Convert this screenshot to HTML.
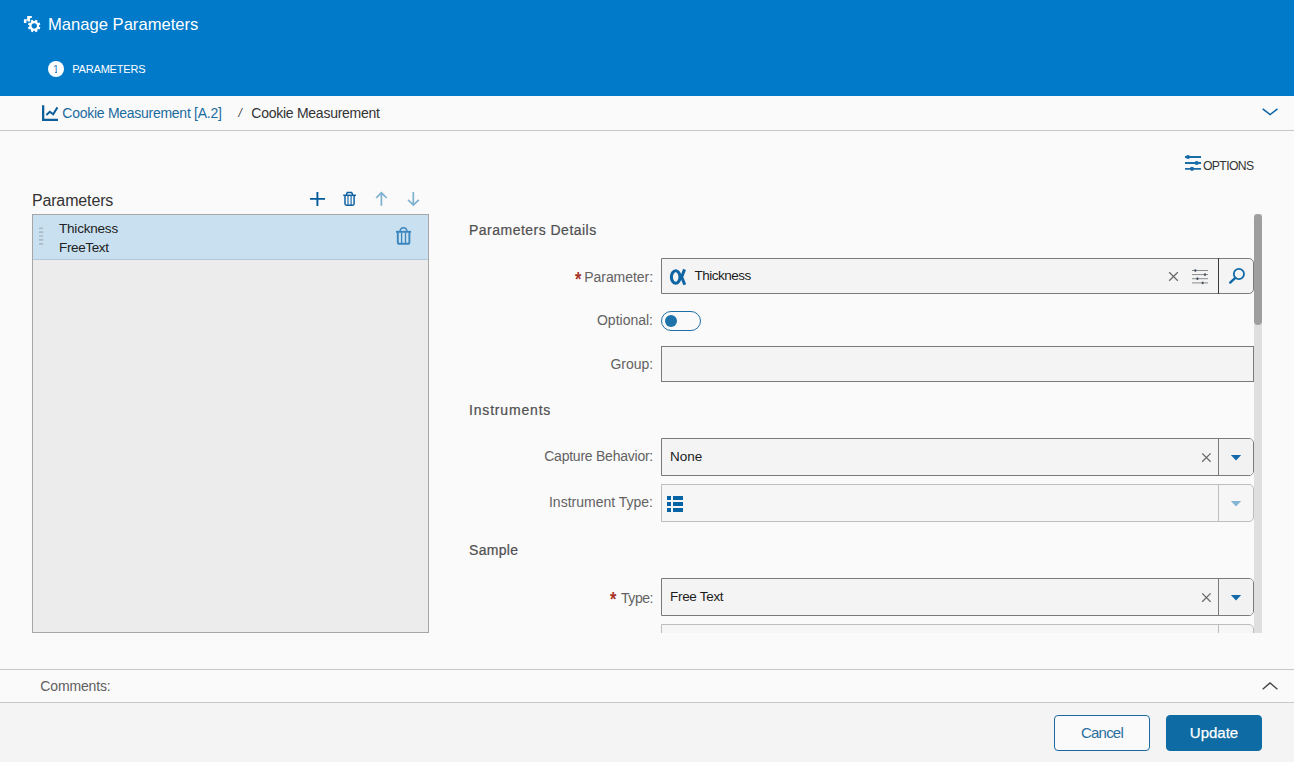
<!DOCTYPE html>
<html lang="en">
<head>
<meta charset="utf-8">
<title>Manage Parameters</title>
<style>
*{box-sizing:border-box;margin:0;padding:0}
html,body{width:1294px;height:762px;overflow:hidden;background:#fafafa}
body{position:relative;font-family:"Liberation Sans",sans-serif;font-size:13px;color:#333}
.abs{position:absolute;white-space:nowrap}
svg.ic{position:absolute;left:0;top:0;width:1294px;height:762px;overflow:visible;pointer-events:none}
/* header */
#hdr{left:0;top:0;width:1294px;height:96px;background:#007ac9}
#title{left:48px;top:13.7px;font-size:16.6px;line-height:22px;color:#fff}
#step-num{left:48px;top:61px;width:16px;height:16px;border-radius:50%;background:#fff;color:#2a7fbf;font-size:10.5px;line-height:16px;text-align:center}
#step-num:before,#step-num:after{content:"";position:absolute;top:11px;height:2px;width:2.4px;background:#fff}
#step-num:before{left:4.6px}#step-num:after{left:9.2px}
#step-txt{left:72.3px;top:60.6px;font-size:11px;line-height:16px;color:#fff;letter-spacing:-.2px}
/* breadcrumb */
#bc{left:0;top:96px;width:1294px;height:35px;border-bottom:1px solid #c8c8c8;background:#fafafa}
#bc1{left:62.3px;top:105.4px;font-size:14px;line-height:16px;color:#1b6a9e;letter-spacing:-.27px}
#bcs{left:238.5px;top:104.5px;font-size:12px;line-height:16px;color:#444;font-style:italic}
#bc2{left:251.3px;top:105.4px;font-size:14px;line-height:16px;color:#333;letter-spacing:-.26px}
#opt{left:1203px;top:158.8px;font-size:12.2px;line-height:15px;color:#333;letter-spacing:-.62px}
/* list */
#plist-title{left:31.9px;top:191px;font-size:16px;line-height:19px;color:#333;letter-spacing:-.14px}
#plist{left:32px;top:214px;width:397px;height:419px;border:1px solid #a6a6a6;background:#ececec}
#prow{left:33px;top:215px;width:395px;height:45px;background:#c8e0ef;border-bottom:1px solid #b4c8d6}
.rowt{left:59px;font-size:13.5px;line-height:16px;color:#222;letter-spacing:-.2px}
/* form */
.h{left:469px;font-size:14px;line-height:18px;color:#505050;-webkit-text-stroke:.22px #505050}
.lbl{right:641px;font-size:14px;line-height:16px;color:#626262;text-align:right}
.star{color:#a8321f;font-size:16px;line-height:16px;font-weight:bold;transform:scale(1.02,1.32);transform-origin:0 0}
.fld{left:661px;width:593px;height:38px;border:1px solid #7a7a7a;background:#f4f4f4}
.fld.lt{border-color:#bdbdbd;background:#f6f6f6}
.fld.rr{border-radius:0 5px 5px 0}
.fld .sep{position:absolute;right:34px;top:-1px;bottom:-1px;width:1px;background:#7a7a7a}
.fld .bb{position:absolute;right:0;top:0;bottom:0;width:34px;background:#f2f2f2;border-radius:0 4px 4px 0}
.fld.lt .bb{background:#f6f6f6}
.fld.lt .sep{background:#bdbdbd}
.val{font-size:13.5px;line-height:16px;color:#1c1c1c;letter-spacing:-.3px}
#clip{left:440px;top:200px;width:830px;height:433px;overflow:hidden}
#clipin{position:absolute;left:-440px;top:-200px;width:1294px;height:762px}
#track{left:1254px;top:214px;width:8px;height:419px;background:#dfdfdf}
#thumb{left:1254px;top:214px;width:8px;height:111px;background:#9e9e9e;border-radius:4px}
#tog{left:661px;top:311px;width:40px;height:20px;border:1px solid #1d6fa5;border-radius:10px;background:#fafafa}
#tog i{position:absolute;left:3px;top:3px;width:12px;height:12px;border-radius:50%;background:#1d72aa}
/* footer */
#cm{left:0;top:669px;width:1294px;height:34px;border-top:1px solid #c8c8c8;border-bottom:1px solid #c8c8c8;background:#fafafa}
#cmt{left:40.3px;top:678.4px;font-size:14px;line-height:16px;color:#5e5e5e;letter-spacing:-.14px}
#ft{left:0;top:703px;width:1294px;height:59px;background:#f4f4f4}
.btn{top:715px;height:36px;border-radius:4px;font-size:15px;line-height:34px;text-align:center}
#cancel{left:1054px;width:96px;border:1px solid #1b6a9e;color:#2a6f9f;background:#fafafa;letter-spacing:-.8px}
#update{left:1166px;width:96px;border:1px solid #0f6ba3;color:#fff;background:#0f6ba3;-webkit-text-stroke:.25px #fff}
</style>
</head>
<body>
<div id="hdr" class="abs"></div>
<div id="title" class="abs">Manage Parameters</div>
<div id="step-num" class="abs">1</div>
<div id="step-txt" class="abs">PARAMETERS</div>

<div id="bc" class="abs"></div>
<div id="bc1" class="abs">Cookie Measurement [A.2]</div>
<div id="bcs" class="abs">/</div>
<div id="bc2" class="abs">Cookie Measurement</div>
<div id="opt" class="abs">OPTIONS</div>

<div id="plist-title" class="abs">Parameters</div>
<div id="plist" class="abs"></div>
<div id="prow" class="abs"></div>
<div class="abs rowt" style="top:221px">Thickness</div>
<div class="abs rowt" style="top:239.5px;letter-spacing:-.36px">FreeText</div>

<div id="clip" class="abs">
<div id="clipin">
<div class="abs h" style="top:221.3px;letter-spacing:.48px">Parameters Details</div>
<div class="abs star" style="left:574.6px;top:269px">*</div>
<div class="abs lbl" style="top:269.4px;letter-spacing:-.05px">Parameter:</div>
<div class="abs fld rr" style="top:258px;height:36px"><div class="sep" style="background:#3a3a3a"></div></div>
<div class="abs val" style="left:694.4px;top:268.2px;letter-spacing:-.5px">Thickness</div>
<div class="abs lbl" style="top:312.3px;letter-spacing:0">Optional:</div>
<div id="tog" class="abs"><i></i></div>
<div class="abs lbl" style="top:356.3px;letter-spacing:-.05px">Group:</div>
<div class="abs fld" style="top:346px;height:36px"></div>
<div class="abs h" style="top:401.3px;letter-spacing:.82px">Instruments</div>
<div class="abs lbl" style="top:448.3px;letter-spacing:-.24px">Capture Behavior:</div>
<div class="abs fld rr" style="top:438px"><div class="bb"></div><div class="sep"></div></div>
<div class="abs val" style="left:670px;top:449.2px;letter-spacing:0">None</div>
<div class="abs lbl" style="top:494.3px;letter-spacing:0">Instrument Type:</div>
<div class="abs fld rr lt" style="top:484px"><div class="sep"></div></div>
<div class="abs h" style="top:541.3px;letter-spacing:.3px">Sample</div>
<div class="abs star" style="left:610.2px;top:589px">*</div>
<div class="abs lbl" style="top:589.6px;letter-spacing:-.45px">Type:</div>
<div class="abs fld rr" style="top:578px"><div class="bb"></div><div class="sep"></div></div>
<div class="abs val" style="left:670px;top:589.4px">Free Text</div>
<div class="abs fld rr lt" style="top:624px"><div class="sep"></div></div>
<div id="track" class="abs"></div>
<div id="thumb" class="abs"></div>
</div>
</div>

<div id="cm" class="abs"></div>
<div id="cmt" class="abs">Comments:</div>
<div id="ft" class="abs"></div>
<div id="cancel" class="abs btn">Cancel</div>
<div id="update" class="abs btn">Update</div>

<!-- ICONS -->
<svg class="ic" viewBox="0 0 1294 762">
<!-- header gears -->
<g fill="#fff">
<path fill-rule="evenodd" d="M39.05 26.64 L40.41 27.28 L39.52 29.44 L38.10 28.93 L37.13 29.90 L37.64 31.32 L35.48 32.21 L34.84 30.85 L33.46 30.85 L32.82 32.21 L30.66 31.32 L31.17 29.90 L30.20 28.93 L28.78 29.44 L27.89 27.28 L29.25 26.64 L29.25 25.26 L27.89 24.62 L28.78 22.46 L30.20 22.97 L31.17 22.00 L30.66 20.58 L32.82 19.69 L33.46 21.05 L34.84 21.05 L35.48 19.69 L37.64 20.58 L37.13 22.00 L38.10 22.97 L39.52 22.46 L40.41 24.62 L39.05 25.26Z M34.25 23.2 a2.75 2.75 0 1 0 0.01 0Z"/>
<path d="M27.2 16 H31.8 V18 H30.1 V21.4 H27.6 V20.6 H26.4 V22.9 H23.9 V19.2 H27.2Z"/>
</g>
<!-- chart icon -->
<g fill="none" stroke="#0f5e9c" stroke-width="2.3">
<path d="M43.15 105.2 V119.8 H58"/>
<path d="M46.4 114.9 L49.8 111.7 L53.2 114.2 L57.4 107.4" stroke-width="2"/>
</g>
<!-- chevrons -->
<path d="M1262.7 108.9 L1270.1 114.6 L1277.5 108.9" fill="none" stroke="#0f64a4" stroke-width="1.6"/>
<path d="M1262.7 689.2 L1270 682.9 L1277.4 689.2" fill="none" stroke="#444" stroke-width="1.4"/>
<!-- options icon -->
<g stroke="#1a6da6" stroke-width="1.8" fill="#1a6da6">
<path d="M1185 157h16M1185 163h16M1185 168.8h16"/>
<circle cx="1188" cy="157" r="1.2"/><circle cx="1196.7" cy="163" r="1.2"/><circle cx="1192" cy="168.8" r="1.2"/>
</g>
<!-- toolbar: plus -->
<path d="M310 198.9h15M317.4 192v14" stroke="#005a99" stroke-width="1.9" fill="none"/>
<!-- toolbar: trash -->
<g fill="none" stroke="#0f62a2" stroke-width="1.5">
<path d="M343.2 195.3h12.8"/>
<path d="M346.2 195 L347.3 192.6 H351.7 L352.8 195"/>
<path d="M345 195.5 V203.8 Q345 205.2 346.4 205.2 H352.7 Q354.1 205.2 354.1 203.8 V195.5"/>
<path d="M348 196v9M351.1 196v9" stroke-width="1.1"/>
</g>
<!-- arrows -->
<g fill="none" stroke="#7db1d0" stroke-width="1.7">
<path d="M381.4 192.6V205.8M376.1 198 L381.4 192.8 L386.7 198"/>
<path d="M413.3 192.1V205.2M408.1 199.9 L413.3 205.1 L418.8 199.9"/>
</g>
<!-- row drag handle -->
<g stroke="#a9bac6" stroke-width="1.6"><path d="M39 228.2h4.2M39 232.1h4.2M39 236h4.2M39 239.9h4.2M39 243.9h4.2"/></g>
<!-- row trash -->
<g fill="none" stroke="#3b86bf" stroke-width="1.9">
<path d="M396 231.8h15.1"/>
<path d="M399.9 231.5 Q400.6 227.7 403.5 227.7 Q406.4 227.7 407.2 231.5" stroke-width="1.4"/>
<path d="M397.8 232 V242.2 Q397.8 243.8 399.4 243.8 H407.8 Q409.4 243.8 409.4 242.2 V232"/>
<path d="M401.6 232.5v11M405.5 232.5v11" stroke-width="1.3"/>
</g>
</svg>

<svg class="ic" viewBox="0 0 1294 762">
<!-- alpha -->
<g fill="none" stroke="#0f64a4" stroke-width="3.1">
<ellipse cx="675.7" cy="277" rx="4.3" ry="6.3"/>
<path d="M684.55 269.4 L681.7 277 L684.75 284.8" stroke-linejoin="miter" stroke-width="3"/>
</g>
<!-- x in param -->
<path d="M1169.2 272.2l8.6 8.6M1177.8 272.2l-8.6 8.6" stroke="#6a6a6a" stroke-width="1.3" fill="none"/>
<!-- sliders -->
<g stroke="#8a8a8a" stroke-width="1" fill="none"><path d="M1192 270.5h16M1192 274.6h16M1192 278.7h16M1192 282.9h16"/></g>
<g fill="#3b4a5a"><rect x="1194.5" y="269.3" width="1.7" height="2.4"/><rect x="1204.1" y="273.4" width="1.7" height="2.4"/><rect x="1196.6" y="277.5" width="1.7" height="2.4"/><rect x="1201.8" y="281.7" width="1.7" height="2.4"/></g>
<!-- magnifier -->
<g fill="none" stroke="#0f6aa8"><circle cx="1238.9" cy="274" r="5.1" stroke-width="1.8"/><path d="M1235 278.1 L1230.2 282.6" stroke-width="2.4" stroke-linecap="round"/></g>
<!-- dropdown x + carets -->
<g stroke="#6a6a6a" stroke-width="1.3" fill="none">
<path d="M1202.2 453.4l8.4 8.4M1210.6 453.4l-8.4 8.4"/>
<path d="M1202.2 593.4l8.4 8.4M1210.6 593.4l-8.4 8.4"/>
</g>
<path d="M1230.9 455h10.3l-5.15 5.5z" fill="#1268a8"/>
<path d="M1230.9 501h10.3l-5.15 5.5z" fill="#84b6d4"/>
<path d="M1230.9 595h10.3l-5.15 5.5z" fill="#1268a8"/>
<!-- list icon -->
<g fill="#0463a4">
<rect x="667" y="496" width="4" height="4"/><rect x="673" y="496" width="10" height="4"/>
<rect x="667" y="502" width="4" height="4"/><rect x="673" y="502" width="10" height="4"/>
<rect x="667" y="508" width="4" height="4"/><rect x="673" y="508" width="10" height="4"/>
</g>
</svg>
</body>
</html>
